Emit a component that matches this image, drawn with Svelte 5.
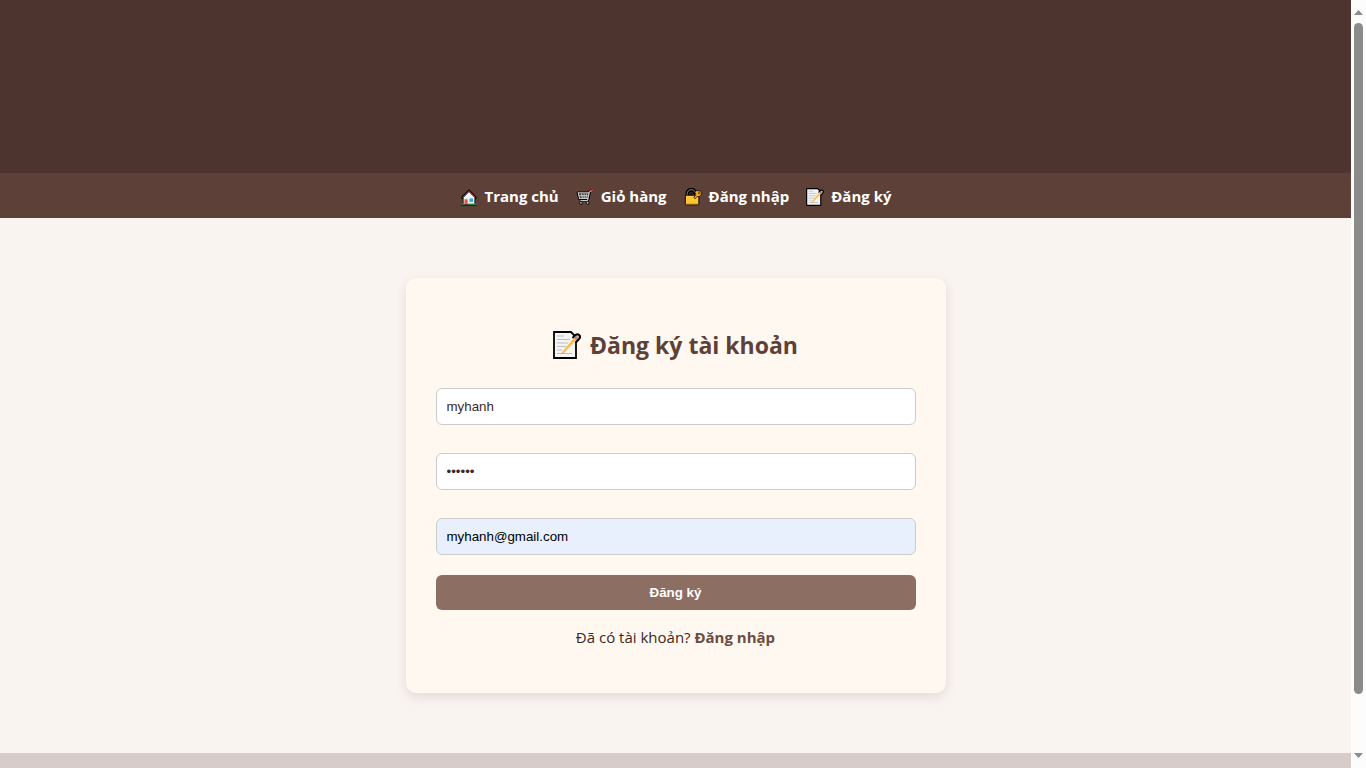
<script>
  let username = $state('myhanh');
  let password = $state('myhanh');
  let email = $state('myhanh@gmail.com');

  const links = [
    { icon: 'home', label: 'Trang chủ' },
    { icon: 'cart', label: 'Giỏ hàng' },
    { icon: 'lock', label: 'Đăng nhập' },
    { icon: 'memo', label: 'Đăng ký' }
  ];
</script>

{#snippet memo()}
  <svg class="icon" viewBox="0 0 28 28" aria-hidden="true">
    <path d="M1 1h17l5 5v21H1z" fill="#f4f4f4" stroke="#000" stroke-width="1.800" />
    <path d="M4 5h7M4 8.500h13M4 12h11M4 15.500h9M4 19h5M4 22.500h15" stroke="#bdbdbd" stroke-width="1.200" />
    <path d="M19.500 7l3.200-3.200q2-1.300 3.600.3t.1 3.500L23.200 11" fill="#d9a7a0" stroke="#000" stroke-width="2" />
    <path d="M9.500 20.500L21 6.800l2.300 2.300L11 22z" fill="#fbc144" />
    <path d="M8 23.500l1.500-3L11 22z" fill="#d8a27a" />
    <path d="M21 6.800l1.600-1.700 2.200 2.200-1.500 1.800z" fill="#8d8d8d" />
  </svg>
{/snippet}

{#snippet glyph(name)}
  {#if name === 'home'}
    <svg class="icon" viewBox="0 0 20 20" aria-hidden="true">
      <path d="M1.500 10L10 1.500l8.500 8.500v2H17v6.500H3V12H1.500z" fill="#000" />
      <path d="M4 10.500L10 4.500l6 6V18H4z" fill="#f2f5f7" />
      <path d="M2.700 10.700L10 3.200l7.300 7.500" fill="none" stroke="#a8392e" stroke-width="1" />
      <path d="M5 12.500h3.500V18H5z" fill="#e8523c" />
      <path d="M10.500 11.500h4v4h-4z" fill="#36a9dc" />
      <path d="M2 18h3M9 18h9" stroke="#2e9b51" stroke-width="1.600" />
      <path d="M1.500 19.200h17" stroke="#111" stroke-width="1" />
    </svg>
  {:else if name === 'cart'}
    <svg class="icon" viewBox="0 0 20 20" aria-hidden="true">
      <path d="M18 2.500l-3 1.500-2 10H5M2 5.500h13L13.500 12H4z" fill="#555" stroke="#000" stroke-width="3" stroke-linejoin="round" />
      <path d="M17 3l-2.200 1.500-2 9.500H5M2.500 5.500h12L13 11.500H4z" fill="none" stroke="#c9c9c9" stroke-width="1.300" />
      <path d="M3 8.500h11M6 6l1 5.500M9 6v5.500M12 6l-1 5.500" stroke="#c9c9c9" stroke-width="1" />
      <path d="M16 3.500l2.500-1.200" stroke="#e45244" stroke-width="2" />
      <circle cx="5.500" cy="16.500" r="1.600" fill="#bbb" stroke="#000" />
      <circle cx="13" cy="16.500" r="1.600" fill="#bbb" stroke="#000" />
    </svg>
  {:else if name === 'lock'}
    <svg class="icon" viewBox="0 0 20 20" aria-hidden="true">
      <path d="M3.500 9V6.500a4.700 4.700 0 0 1 9.400 0V9" fill="#2a211e" stroke="#000" stroke-width="4" />
      <path d="M3.500 9V6.500a4.700 4.700 0 0 1 9.400 0V9" fill="none" stroke="#999" stroke-width="1" />
      <rect x="1.500" y="8" width="15" height="10.700" rx="1" fill="#ffc536" stroke="#000" />
      <path d="M12 4.500l1.500-1.500h3.500l2 2v2.500l-2 2h-2.500L12.500 12 11 10.500l2-3z" fill="#f4a522" stroke="#000" stroke-width=".8" />
      <circle cx="16.600" cy="5.600" r="1" fill="#3f2b1c" />
      <path d="M2.500 17.300h13" stroke="#eda72b" stroke-width="1.500" />
    </svg>
  {:else}
    {@render memo()}
  {/if}
{/snippet}

<div class="window">
  <div class="page">
    <header></header>
    <nav>
      {#each links as link}
        <a href="#{link.icon}"><span class="nav-icon">{@render glyph(link.icon)}</span>{link.label}</a>
      {/each}
    </nav>
    <main>
      <form class="card" onsubmit={(e) => e.preventDefault()}>
        <h2><span class="title-icon">{@render memo()}</span>Đăng ký tài khoản</h2>
        <input type="text" aria-label="Tên đăng nhập" bind:value={username} />
        <input type="password" aria-label="Mật khẩu" bind:value={password} />
        <input class="filled" type="email" aria-label="Email" bind:value={email} />
        <button type="submit">Đăng ký</button>
        <p>Đã có tài khoản? <a href="#lock">Đăng nhập</a></p>
      </form>
    </main>
    <footer></footer>
  </div>
  <div class="scrollbar" aria-hidden="true">
    <svg viewBox="0 0 9 5"><path d="M0 5L4.500 0 9 5z" fill="#8b8b8b" /></svg>
    <div class="track"><div class="thumb"></div></div>
    <svg viewBox="0 0 9 5"><path d="M0 0L4.500 5 9 0z" fill="#8b8b8b" /></svg>
  </div>
</div>

<style>
  :global(body) {
    margin: 0;
    background: #f9f4ef;
  }
  .window {
    display: flex;
    height: 100vh;
    overflow: hidden;
    font-family: "Segoe UI", "Open Sans", "Noto Sans", sans-serif;
    font-size: 15px;
    color: #3e2723;
  }
  .page {
    flex: 1;
    display: flex;
    flex-direction: column;
    background: #f9f4ef;
  }
  header {
    height: 173px;
    flex: none;
    background: #4e342e;
  }
  nav {
    display: flex;
    justify-content: center;
    gap: 17px;
    padding: 13px 0 11px;
    background: #5d4037;
  }
  nav a {
    display: flex;
    align-items: center;
    line-height: 21px;
    font-weight: 700;
    color: #fff;
    text-decoration: none;
  }
  .icon {
    display: block;
    width: 100%;
    height: 100%;
  }
  .nav-icon {
    width: 18px;
    height: 18px;
    margin-right: 7px;
  }
  main {
    padding: 60px 20px;
  }
  .card {
    box-sizing: border-box;
    max-width: 540px;
    margin: 0 auto;
    padding: 50px 30px 29px;
    display: flex;
    flex-direction: column;
    border-radius: 10px;
    background: #fff8f0;
    box-shadow: 0 4px 12px rgba(0, 0, 0, 0.1);
  }
  h2 {
    display: flex;
    align-items: center;
    justify-content: center;
    margin: 0 0 26px;
    font-size: 23px;
    line-height: 34px;
    color: #5d4037;
  }
  .title-icon {
    width: 28px;
    height: 28px;
    margin-right: 9px;
  }
  input {
    box-sizing: border-box;
    width: 100%;
    height: 37px;
    margin: 0 0 28px;
    padding: 0 10px;
    border: 1px solid #ccc;
    border-radius: 6px;
    background: #fff;
    color: #3e2723;
    font-family: "Liberation Sans", Arial, sans-serif;
  }
  .filled {
    margin-bottom: 20px;
    background: #e8f0fe;
    color: #000;
  }
  button {
    height: 35px;
    border: 0;
    border-radius: 6px;
    background: #8d6e63;
    color: #fff;
    font-family: "Liberation Sans", Arial, sans-serif;
    font-weight: 700;
  }
  p {
    margin: 16px 0;
    text-align: center;
    line-height: 22px;
  }
  p a {
    color: #6d4c41;
    font-weight: 700;
    text-decoration: none;
  }
  footer {
    flex: 1;
    background: #d7ccc8;
  }
  .scrollbar {
    box-sizing: border-box;
    width: 15px;
    padding: 10px 0;
    display: flex;
    flex-direction: column;
    align-items: center;
    gap: 8px;
    background: #fcfcfc;
  }
  .scrollbar svg {
    width: 9px;
    height: 5px;
  }
  .track {
    flex: 1;
  }
  .thumb {
    width: 9px;
    height: 93%;
    border-radius: 5px;
    background: #8b8b8b;
  }
</style>
